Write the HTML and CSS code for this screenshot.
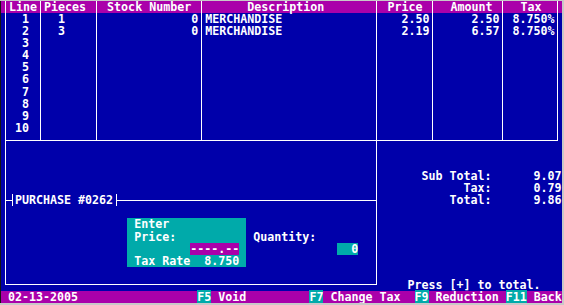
FILE: index.html
```html
<!DOCTYPE html>
<html lang="en">

<head>
    <meta charset="UTF-8">
    <meta name="viewport" content="width=device-width, initial-scale=1.0">
    <title>Sales Entry</title>
    <link rel="stylesheet" href="styles.css">
</head>

<body>
    <div class="screen">
        <div class="table">
            <div class="col c-line">
                <div class="th">Line</div>
                <div class="td">1</div>
                <div class="td">2</div>
                <div class="td">3</div>
                <div class="td">4</div>
                <div class="td">5</div>
                <div class="td">6</div>
                <div class="td">7</div>
                <div class="td">8</div>
                <div class="td">9</div>
                <div class="td">10</div>
            </div>
            <div class="col c-pcs">
                <div class="th">Pieces</div>
                <div class="td">1</div>
                <div class="td">3</div>
            </div>
            <div class="col c-stock">
                <div class="th">Stock Number</div>
                <div class="td">0</div>
                <div class="td">0</div>
            </div>
            <div class="col c-desc">
                <div class="th">Description</div>
                <div class="td">MERCHANDISE</div>
                <div class="td">MERCHANDISE</div>
            </div>
            <div class="col c-price">
                <div class="th">Price</div>
                <div class="td">2.50</div>
                <div class="td">2.19</div>
            </div>
            <div class="col c-amount">
                <div class="th">Amount</div>
                <div class="td">2.50</div>
                <div class="td">6.57</div>
            </div>
            <div class="col c-tax">
                <div class="th">Tax</div>
                <div class="td">8.750%</div>
                <div class="td">8.750%</div>
            </div>
        </div>

        <div class="lower">
            <div class="purchase">
                <div class="rule">
                    <span class="rule-line lead"></span>
                    <span class="tick"></span>
                    <span class="rule-text">PURCHASE #0262</span>
                    <span class="tick"></span>
                    <span class="rule-line rest"></span>
                </div>
                <div class="entry">
                    <div class="price-box">
                        <div>Enter</div>
                        <div>Price:</div>
                        <div class="field">----.--</div>
                        <div class="pre">Tax Rate  8.750</div>
                    </div>
                    <div class="qty">
                        <div>Quantity:</div>
                        <div class="qty-field">0</div>
                    </div>
                </div>
            </div>
            <div class="totals">
                <div class="tot-row"><span class="tot-label">Sub Total:</span><span class="tot-val">9.07</span></div>
                <div class="tot-row"><span class="tot-label">Tax:</span><span class="tot-val">0.79</span></div>
                <div class="tot-row"><span class="tot-label">Total:</span><span class="tot-val">9.86</span></div>
                <div class="press">Press [+] to total.</div>
            </div>
        </div>

        <div class="status"> 02-13-2005                 <span class="key">F5</span> Void         <span class="key">F7</span> Change Tax  <span class="key">F9</span> Reduction <span class="key">F11</span> Back</div>
    </div>
</body>

</html>
```

FILE: styles.css
```css
:root {
    --rh: 12.08px; /* one text row */
    --blue: #0000aa;
    --mag: #aa00aa;
    --teal: #00aaaa;
    --line: #ffffff;
}

body {
    margin: 0;
    background-color: #c8c8c8;
}

/* 80 x 25 text screen, 1ch = one character cell */
.screen {
    font-family: "DejaVu Sans Mono", "Liberation Mono", monospace;
    font-weight: bold;
    font-size: 11.65px;
    line-height: var(--rh);
    color: #ffffff;
    width: 80ch;
    height: calc(var(--rh) * 25);
    margin-top: 1px;
    border-left: 1px solid #141414;
    background: linear-gradient(var(--mag) var(--rh), var(--blue) var(--rh));
    display: flex;
    flex-direction: column;
    overflow: hidden;
}

/* item table */
.table {
    display: flex;
    margin: 0 0.5ch;
    height: calc(var(--rh) * 11.5);
    border-bottom: 1px solid var(--line);
}

.col {
    box-sizing: border-box;
    border-left: 1px solid var(--line);
}

.col:last-child {
    border-right: 1px solid var(--line);
}

.th,
.td {
    height: var(--rh);
    white-space: pre;
}

.c-line { width: 5ch; }
.c-pcs { width: 8ch; }
.c-stock { width: 15ch; }
.c-desc { width: 25ch; }
.c-price { width: 8ch; }
.c-amount { width: 10ch; }
.c-tax { width: 8ch; }

.c-line .th { padding-left: 0.5ch; }
.c-pcs .th { padding-left: 0.5ch; }
.c-stock .th { padding-left: 1.5ch; }
.c-desc .th { padding-left: 6.5ch; }
.c-price .th { padding-left: 1.5ch; }
.c-amount .th { padding-left: 2.5ch; }
.c-tax .th { padding-left: 2.5ch; }

.c-line .td {
    text-align: right;
    padding-right: 1.5ch;
}

.c-pcs .td { padding-left: 2.5ch; }
.c-desc .td { padding-left: 0.5ch; }

.c-stock .td,
.c-price .td,
.c-amount .td,
.c-tax .td {
    text-align: right;
    padding-right: calc(0.5ch - 1px);
}

/* purchase box + totals */
.lower {
    display: flex;
    height: calc(var(--rh) * 12.5 - 1px);
}

.purchase {
    box-sizing: border-box;
    width: calc(53ch + 1px);
    margin: 0 0 calc(var(--rh) / 2) 0.5ch;
    padding-top: calc(var(--rh) * 4.5 - 1px);
    border: 1px solid var(--line);
    border-top: none;
}

.rule {
    display: flex;
    align-items: center;
    height: var(--rh);
    margin-left: -1px;
}

.rule-line {
    height: 1px;
    background-color: var(--line);
}

.rule-line.lead { width: 1ch; }
.rule-line.rest { flex: 1; }

.tick {
    width: 1px;
    align-self: stretch;
    background-color: var(--line);
}

.rule-text {
    padding: 0 calc(0.5ch - 1px);
    white-space: pre;
}

.entry {
    display: flex;
    margin-top: var(--rh);
}

.price-box {
    box-sizing: border-box;
    width: 17ch;
    margin-left: calc(17.5ch - 1px);
    padding: 0 1ch;
    background-color: var(--teal);
}

.field {
    width: 7ch;
    margin-left: 8ch;
    background-color: var(--mag);
}

.pre {
    white-space: pre;
}

.qty {
    margin-left: 1ch;
    padding-top: var(--rh);
}

.qty-field {
    width: 3ch;
    margin-left: 12ch;
    text-align: right;
    background-color: var(--teal);
}

.totals {
    flex: 1;
    display: flex;
    flex-direction: column;
    padding-top: calc(var(--rh) * 2.5 - 1px);
}

.tot-row {
    display: flex;
}

.tot-label {
    width: calc(16.5ch - 1px);
    text-align: right;
}

.tot-val {
    width: 10ch;
    text-align: right;
}

.press {
    margin-top: auto;
    padding-left: calc(4.5ch - 1px);
    white-space: pre;
}

/* function key bar */
.status {
    height: var(--rh);
    background-color: var(--mag);
    white-space: pre;
}

.key {
    background-color: var(--teal);
}
```
